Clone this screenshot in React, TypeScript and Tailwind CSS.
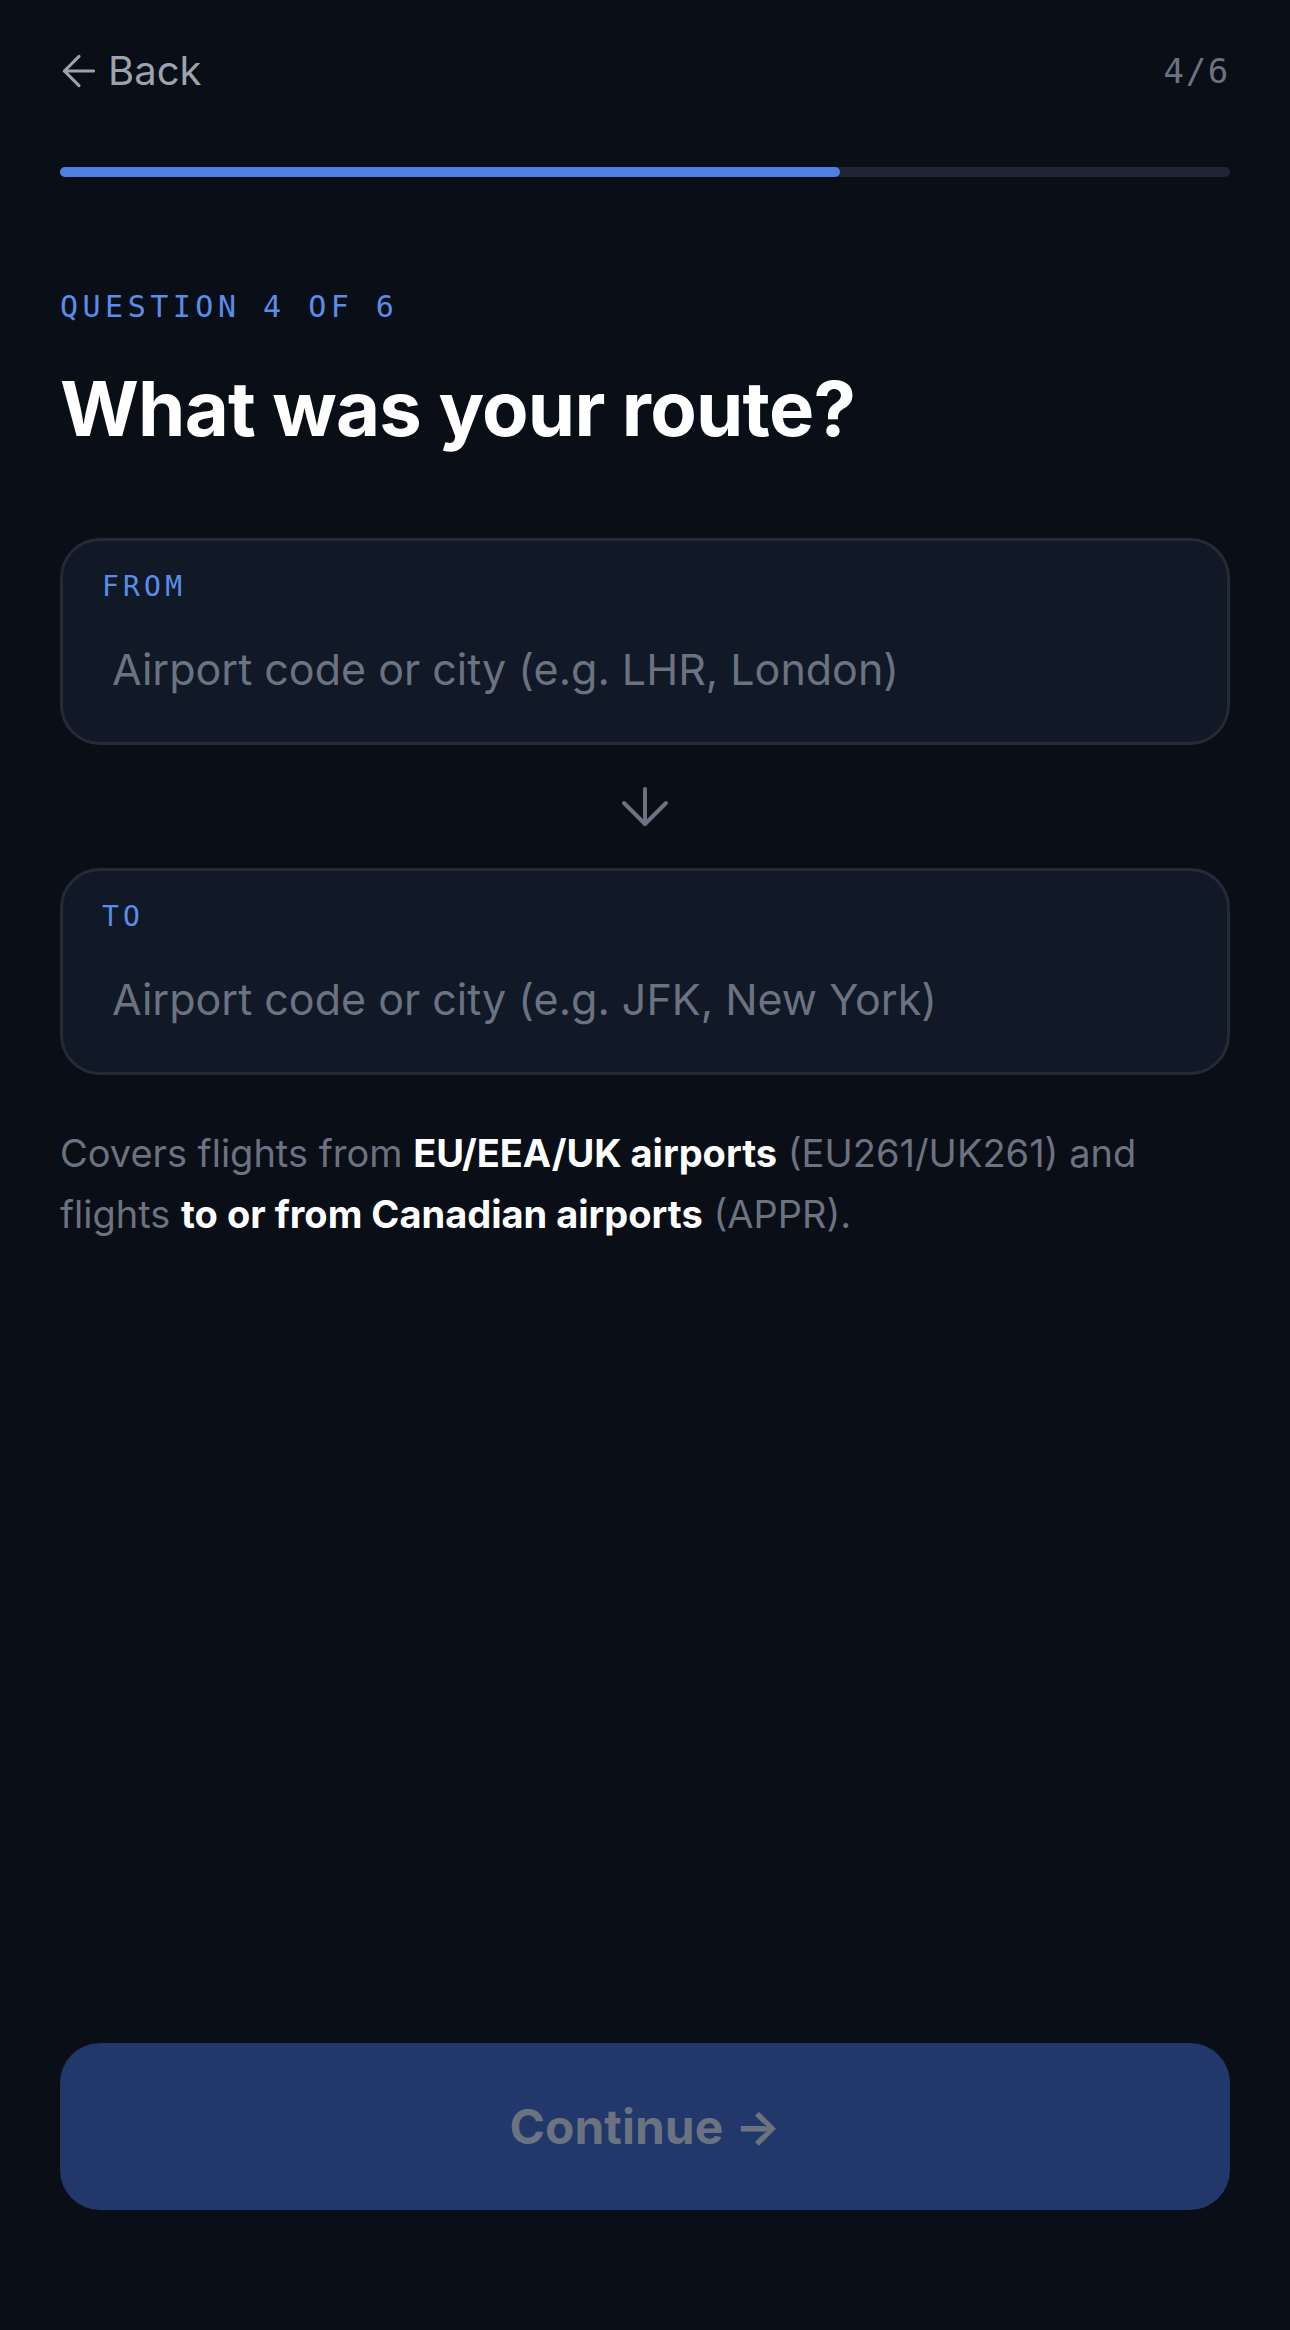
import { ArrowLeft } from 'lucide-react';

const sans = "font-['Inter','Noto_Sans',sans-serif]";
const mono = "font-['DejaVu_Sans_Mono','Liberation_Mono',monospace]";

function RouteField({ label, placeholder }: { label: string; placeholder: string }) {
  return (
    <div className="rounded-[40px] border-[3px] border-[#242b37] bg-[#111826] pt-[29px] pb-[43px] px-[39px]">
      <div className={`${mono} text-[28px] leading-[34px] tracking-[0.15em] text-[#5a8de8]`}>{label}</div>
      <input
        className={`${sans} mt-[35px] block h-[60px] w-full bg-transparent px-[10px] text-[43px] text-white outline-none placeholder:text-[#6b7280]`}
        placeholder={placeholder}
      />
    </div>
  );
}

export default function App() {
  const step = 4;
  const total = 6;

  return (
    <div className={`${sans} min-h-[2330px] bg-[#0a0e17] px-[60px] flex flex-col`}>
      {/* Header */}
      <div className="pt-[48px] flex items-center justify-between h-[94px]">
        <button className="flex items-center gap-[4px] -ml-[6px] text-[#9ca3af]">
          <ArrowLeft size={50} strokeWidth={1.5} />
          <span className="text-[40px] leading-[46px]">Back</span>
        </button>
        <span className={`${mono} text-[34px] leading-[46px] tracking-[0.05em] text-[#6b7280]`}>
          {step}/{total}
        </span>
      </div>

      {/* Progress */}
      <div className="mt-[73px] h-[10px] w-full rounded-full bg-[#1f2633]">
        <div className="h-full rounded-full bg-[#4f7fe0]" style={{ width: `${(step / total) * 100}%` }} />
      </div>

      <div className={`${mono} mt-[112px] text-[30px] leading-[36px] tracking-[0.15em] text-[#5a8de8]`}>
        QUESTION 4 OF 6
      </div>
      <h1 className="mt-[41px] text-[76px] leading-[84px] font-bold tracking-[-0.01em] text-white">
        What was your route?
      </h1>

      <div className="mt-[88px]">
        <RouteField label="FROM" placeholder="Airport code or city (e.g. LHR, London)" />
        <div className="h-[123px] flex items-center justify-center">
          <svg width="50" height="42" viewBox="0 0 50 42" fill="none" stroke="#6b7280" strokeWidth="4" strokeLinecap="round" strokeLinejoin="round">
            <path d="M25 3V38" />
            <path d="M4 17L25 38L46 17" />
          </svg>
        </div>
        <RouteField label="TO" placeholder="Airport code or city (e.g. JFK, New York)" />
      </div>

      <p className="mt-[48px] text-[38px] leading-[61px] text-[#6b7280]">
        Covers flights from <span className="font-bold text-white">EU/EEA/UK airports</span> (EU261/UK261) and
        flights <span className="font-bold text-white">to or from Canadian airports</span> (APPR).
      </p>

      <div className="mt-auto pb-[120px]">
        <button className="w-full h-[167px] rounded-[40px] bg-[#22376a] text-[48px] font-bold text-[#6b7280]">
          Continue →
        </button>
      </div>
    </div>
  );
}
